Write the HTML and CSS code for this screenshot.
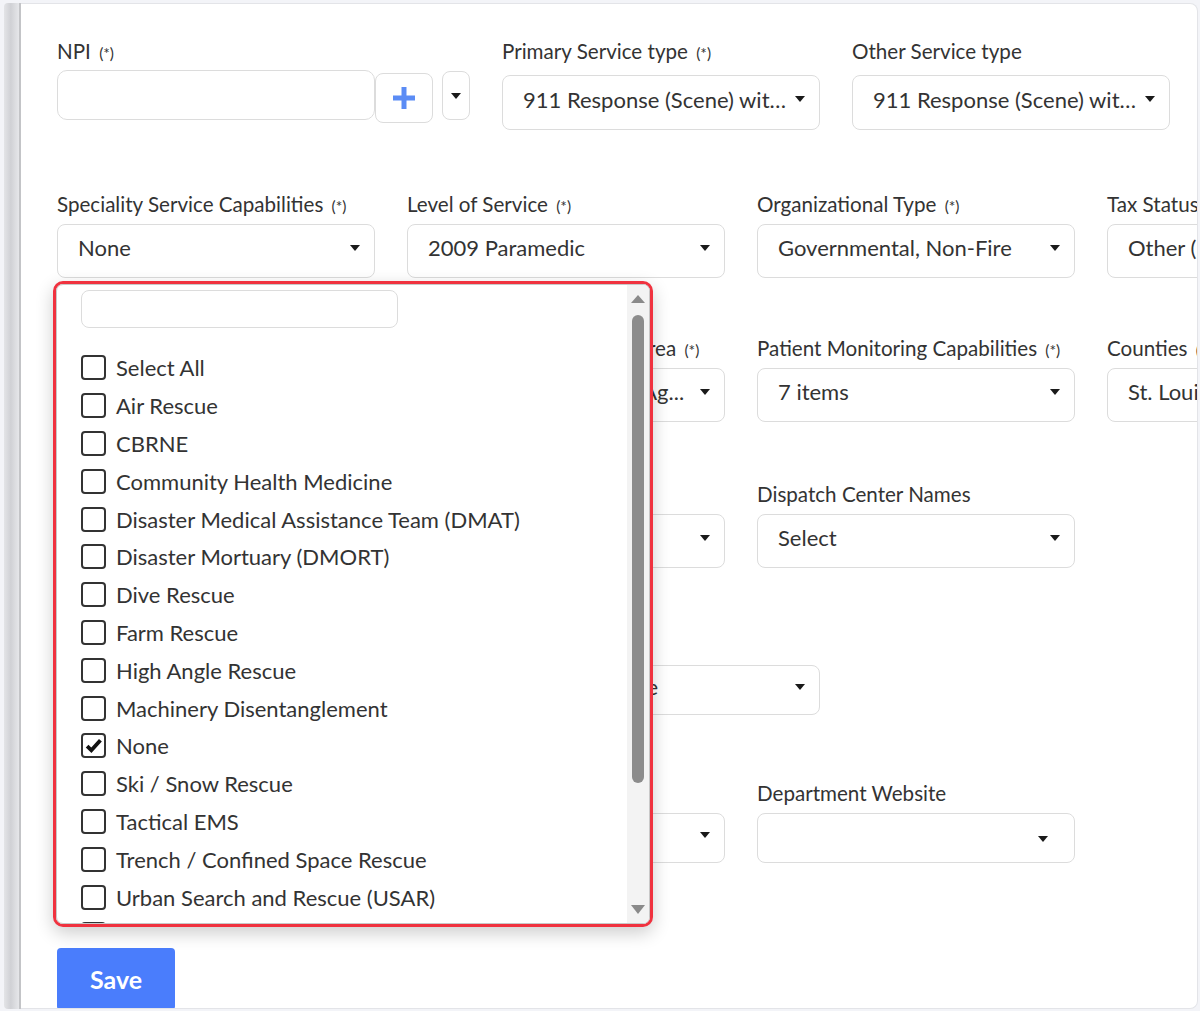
FILE: index.html
```html
<!DOCTYPE html>
<html lang="en">
<head>
    <meta charset="UTF-8">
    <meta name="viewport" content="width=device-width, initial-scale=1.0">
    <title>Agency Profile</title>
    <link rel="stylesheet" href="styles.css">
</head>
<body>
    <div class="page">
        <div class="rail"></div>

        <div class="card">
            <!-- Row 1 -->
            <div class="row row-wide row-first">
                <div class="field">
                    <label>NPI <span class="req">(*)</span></label>
                    <div class="npi-controls">
                        <input type="text" class="text-input">
                        <button class="add-btn">
                            <svg width="24" height="24" viewBox="0 0 24 24"><path d="M12 1v22M1 12h22" stroke="#5b8cf5" stroke-width="5" fill="none"/></svg>
                        </button>
                        <button class="caret-btn"><span class="caret"></span></button>
                    </div>
                </div>
                <div class="field">
                    <label>Primary Service type <span class="req">(*)</span></label>
                    <div class="select select-tall"><span class="value">911 Response (Scene) with Transport Capability</span><span class="caret"></span></div>
                </div>
                <div class="field">
                    <label>Other Service type</label>
                    <div class="select select-tall"><span class="value">911 Response (Scene) with Transport Capability</span><span class="caret"></span></div>
                </div>
            </div>

            <!-- Row 2 -->
            <div class="row row-services">
                <div class="field field-speciality">
                    <label>Speciality Service Capabilities <span class="req">(*)</span></label>
                    <div class="select"><span class="value">None</span><span class="caret"></span></div>

                    <div class="dropdown">
                        <div class="dd-inner">
                            <div class="dd-main">
                                <input type="text" class="dd-search">
                                <ul class="dd-list">
                                    <li class="dd-item"><span class="checkbox"></span>Select All</li>
                                    <li class="dd-item"><span class="checkbox"></span>Air Rescue</li>
                                    <li class="dd-item"><span class="checkbox"></span>CBRNE</li>
                                    <li class="dd-item"><span class="checkbox"></span>Community Health Medicine</li>
                                    <li class="dd-item"><span class="checkbox"></span>Disaster Medical Assistance Team (DMAT)</li>
                                    <li class="dd-item"><span class="checkbox"></span>Disaster Mortuary (DMORT)</li>
                                    <li class="dd-item"><span class="checkbox"></span>Dive Rescue</li>
                                    <li class="dd-item"><span class="checkbox"></span>Farm Rescue</li>
                                    <li class="dd-item"><span class="checkbox"></span>High Angle Rescue</li>
                                    <li class="dd-item"><span class="checkbox"></span>Machinery Disentanglement</li>
                                    <li class="dd-item"><span class="checkbox checked"><svg width="17" height="17" viewBox="0 0 16 16"><path d="M2 8.5l4 4 8.5-9.5" stroke="#111" stroke-width="3.6" fill="none"/></svg></span>None</li>
                                    <li class="dd-item"><span class="checkbox"></span>Ski / Snow Rescue</li>
                                    <li class="dd-item"><span class="checkbox"></span>Tactical EMS</li>
                                    <li class="dd-item"><span class="checkbox"></span>Trench / Confined Space Rescue</li>
                                    <li class="dd-item"><span class="checkbox"></span>Urban Search and Rescue (USAR)</li>
                                    <li class="dd-item"><span class="checkbox"></span>Water Rescue</li>
                                </ul>
                            </div>
                            <div class="dd-scrollbar">
                                <span class="arrow-up"></span>
                                <span class="thumb"></span>
                                <span class="arrow-down"></span>
                            </div>
                        </div>
                    </div>
                </div>
                <div class="field">
                    <label>Level of Service <span class="req">(*)</span></label>
                    <div class="select"><span class="value">2009 Paramedic</span><span class="caret"></span></div>
                </div>
                <div class="field">
                    <label>Organizational Type <span class="req">(*)</span></label>
                    <div class="select"><span class="value">Governmental, Non-Fire</span><span class="caret"></span></div>
                </div>
                <div class="field">
                    <label>Tax Status</label>
                    <div class="select"><span class="value">Other (Non-Profit)</span><span class="caret"></span></div>
                </div>
            </div>

            <!-- Row 3 -->
            <div class="row row-area">
                <div class="field">
                    <label>Service Area Type <span class="req">(*)</span></label>
                    <div class="select"><span class="value">Urban</span><span class="caret"></span></div>
                </div>
                <div class="field">
                    <label>Regional Primary Service Area <span class="req">(*)</span></label>
                    <div class="select"><span class="value">Emergency Med. Svcs Ag...</span><span class="caret"></span></div>
                </div>
                <div class="field">
                    <label>Patient Monitoring Capabilities <span class="req">(*)</span></label>
                    <div class="select"><span class="value">7 items</span><span class="caret"></span></div>
                </div>
                <div class="field">
                    <label>Counties <span class="req">(*)</span></label>
                    <div class="select"><span class="value">St. Louis County</span><span class="caret"></span></div>
                </div>
            </div>

            <!-- Row 4 -->
            <div class="row row-dispatch">
                <div class="field">
                    <label>Dispatch Center</label>
                    <div class="select"><span class="value">Select</span><span class="caret"></span></div>
                </div>
                <div class="field">
                    <label>Dispatch Type</label>
                    <div class="select"><span class="value">Select</span><span class="caret"></span></div>
                </div>
                <div class="field">
                    <label>Dispatch Center Names</label>
                    <div class="select"><span class="value">Select</span><span class="caret"></span></div>
                </div>
            </div>

            <!-- Row 5 -->
            <div class="row row-wide row-fifth">
                <div class="field">
                    <label>Billing Status</label>
                    <div class="select select-short"><span class="value">Select</span><span class="caret"></span></div>
                </div>
                <div class="field">
                    <label>Fire Department</label>
                    <div class="select select-short select-indent"><span class="value">Not Available</span><span class="caret"></span></div>
                </div>
            </div>

            <!-- Row 6 -->
            <div class="row row-last">
                <div class="field">
                    <label>Department Phone</label>
                    <div class="select select-short"><span class="value"></span><span class="caret"></span></div>
                </div>
                <div class="field">
                    <label>Department Email</label>
                    <div class="select select-short"><span class="value"></span><span class="caret"></span></div>
                </div>
                <div class="field">
                    <label>Department Website</label>
                    <div class="select select-short"><span class="value"></span><span class="caret caret-low"></span></div>
                </div>
            </div>

            <button class="save-btn">Save</button>
        </div>
    </div>
</body>
</html>
```

FILE: styles.css
```css
* {
    box-sizing: border-box;
}
body {
    margin: 0;
    background: #f3f4f8;
    font-family: Lato, "Open Sans", sans-serif;
    color: #333;
}
.page {
    display: flex;
    height: 1011px;
    padding: 3px 2px 2px 4px;
}
.rail {
    width: 17px;
    background: linear-gradient(to right, #e3e4e7, #d0d1d5 45%, #e6e7ea);
    border-right: 2px solid #c3c4c7;
    border-radius: 4px 0 0 4px;
}
.card {
    flex: 1;
    background: white;
    border: 1px solid #e3e4e8;
    border-left: none;
    border-radius: 0 8px 8px 0;
    overflow: hidden;
    padding: 35px 0 0 36px;
}
.row {
    display: grid;
    grid-template-columns: repeat(4, 318px);
    column-gap: 32px;
    margin-top: 60px;
}
.row-wide {
    grid-template-columns: 413px 318px 318px;
}
.row-first { margin-top: 0; }
.row-services { margin-top: 62px; }
.row-area { margin-top: 58px; }
.row-dispatch { margin-top: 60px; }
.row-fifth { margin-top: 65px; }
.row-last { margin-top: 66px; }

.field {
    min-width: 0;
}
.field label {
    display: block;
    font-size: 20.6px;
    line-height: 24px;
    height: 24px;
    margin-bottom: 8px;
    white-space: nowrap;
}
.req {
    font-size: 15.5px;
    line-height: 1;
    margin-left: 3px;
}
.select {
    height: 54px;
    border: 1px solid #dcdcdc;
    border-radius: 8px;
    display: flex;
    align-items: center;
    padding: 0 14px 7px 20px;
    font-size: 22px;
    background: white;
}
.select-tall {
    height: 55px;
    margin-top: 12px;
}
.select-short {
    height: 50px;
}
.select-indent {
    padding-left: 27px;
}
.select .value {
    flex: 1;
    overflow: hidden;
    white-space: nowrap;
    text-overflow: ellipsis;
}
.caret {
    width: 0;
    height: 0;
    border-left: 5px solid transparent;
    border-right: 5px solid transparent;
    border-top: 6px solid #1a1a1a;
    margin-left: 6px;
    flex: none;
}
.caret-low {
    margin-top: 9px;
    margin-right: 12px;
}

/* NPI input group */
.npi-controls {
    display: flex;
    align-items: flex-start;
    margin-top: -1px;
}
.text-input {
    width: 318px;
    height: 50px;
    border: 1px solid #dcdcdc;
    border-radius: 10px;
}
.add-btn {
    width: 58px;
    height: 50px;
    margin-top: 3px;
    border: 1px solid #dcdcdc;
    border-radius: 8px;
    background: white;
    display: flex;
    align-items: center;
    justify-content: center;
    padding: 0;
}
.caret-btn {
    width: 28px;
    height: 49px;
    margin: 1px 0 0 9px;
    border: 1px solid #dcdcdc;
    border-radius: 8px;
    background: white;
    display: flex;
    align-items: center;
    justify-content: center;
    padding: 0;
}
.caret-btn .caret {
    margin: 0;
}

/* multiselect popup */
.field-speciality {
    position: relative;
    z-index: 5;
}
.dropdown {
    position: absolute;
    top: calc(100% + 3px);
    left: -4px;
    width: 600px;
    height: 646px;
    border: 3px solid #f0323f;
    border-radius: 10px;
    background: white;
    box-shadow: 0 6px 18px rgba(0, 0, 0, 0.2);
}
.dd-inner {
    display: flex;
    height: 100%;
    border: 1px solid #c8c8c8;
    border-radius: 7px;
    overflow: hidden;
}
.dd-main {
    flex: 1;
    padding: 5px 0 0 24px;
    overflow: hidden;
}
.dd-search {
    display: block;
    width: 317px;
    height: 38px;
    border: 1px solid #dcdcdc;
    border-radius: 8px;
}
.dd-list {
    list-style: none;
    margin: 21px 0 0;
    padding: 0;
}
.dd-item {
    display: flex;
    align-items: center;
    height: 37.8px;
    font-size: 22px;
    white-space: nowrap;
}
.checkbox {
    width: 25px;
    height: 25px;
    border: 2px solid #333;
    border-radius: 4px;
    margin-right: 10px;
    flex: none;
    display: flex;
    align-items: center;
    justify-content: center;
}
.dd-scrollbar {
    width: 22px;
    background: #f3f3f3;
    display: flex;
    flex-direction: column;
    align-items: center;
    padding: 10px 0 9px;
}
.arrow-up {
    width: 0;
    height: 0;
    border-left: 7px solid transparent;
    border-right: 7px solid transparent;
    border-bottom: 8px solid #8a8a8a;
}
.thumb {
    width: 12px;
    height: 468px;
    margin-top: 12px;
    border-radius: 6px;
    background: #8c8c8c;
}
.arrow-down {
    margin-top: auto;
    width: 0;
    height: 0;
    border-left: 7px solid transparent;
    border-right: 7px solid transparent;
    border-top: 9px solid #8a8a8a;
}

.save-btn {
    display: block;
    margin-top: 85px;
    width: 118px;
    height: 62px;
    background: #4a7dfc;
    border: none;
    border-radius: 4px;
    color: white;
    font-family: Lato, "Open Sans", sans-serif;
    font-size: 25px;
    font-weight: 700;
}
```
